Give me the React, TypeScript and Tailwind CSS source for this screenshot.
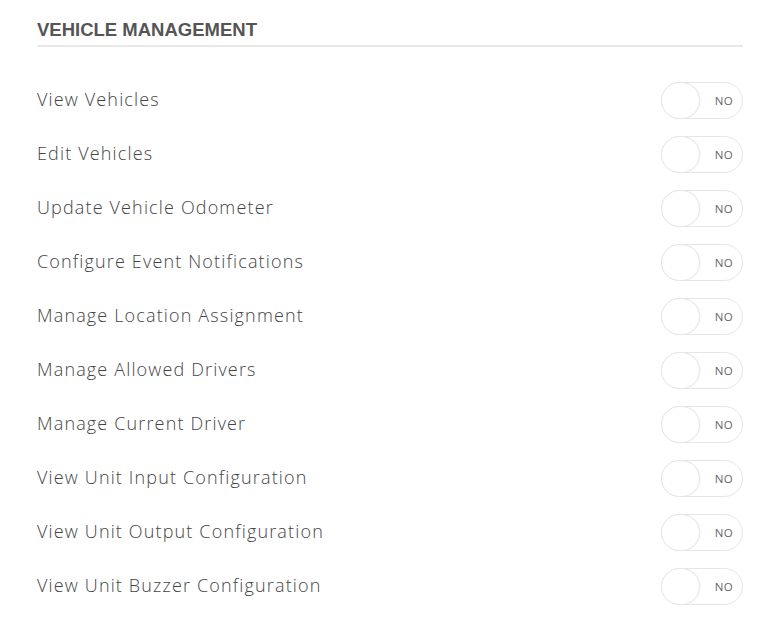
import React from "react";

const items = [
  "View Vehicles",
  "Edit Vehicles",
  "Update Vehicle Odometer",
  "Configure Event Notifications",
  "Manage Location Assignment",
  "Manage Allowed Drivers",
  "Manage Current Driver",
  "View Unit Input Configuration",
  "View Unit Output Configuration",
  "View Unit Buzzer Configuration",
];

function Toggle() {
  return (
    <div className="relative w-[82px] h-[37px] rounded-full border border-[#e6e6e6] bg-white flex items-center justify-end pr-[9px]">
      <div className="absolute left-[-1px] top-[-1px] w-[39px] h-[37px] rounded-full border border-[#e6e6e6] bg-white shadow-[1px_0_1px_rgba(0,0,0,0.04)]" />
      <span className="text-[11.5px] tracking-[0.3px] text-[#666] font-['Open_Sans',sans-serif]">NO</span>
    </div>
  );
}

export default function App() {
  return (
    <div className="w-[778px] h-[617px] bg-white px-[37px] pt-[19px]">
      <div className="border-b-2 border-[#e8e8e8] pb-[4px] mr-[-2px]">
        <h2 className="font-['Liberation_Sans',Arial,sans-serif] font-bold text-[18.5px] leading-[22px] text-[#555]">
          VEHICLE MANAGEMENT
        </h2>
      </div>
      <div className="mt-[35px] flex flex-col gap-[17px] mr-[-2px]">
        {items.map((t) => (
          <div key={t} className="flex items-center justify-between h-[37px]">
            <span className="font-['Open_Sans',sans-serif] text-[18px] font-light tracking-[1.15px] leading-[24px] text-[#444] pb-[3px]">{t}</span>
            <Toggle />
          </div>
        ))}
      </div>
    </div>
  );
}
